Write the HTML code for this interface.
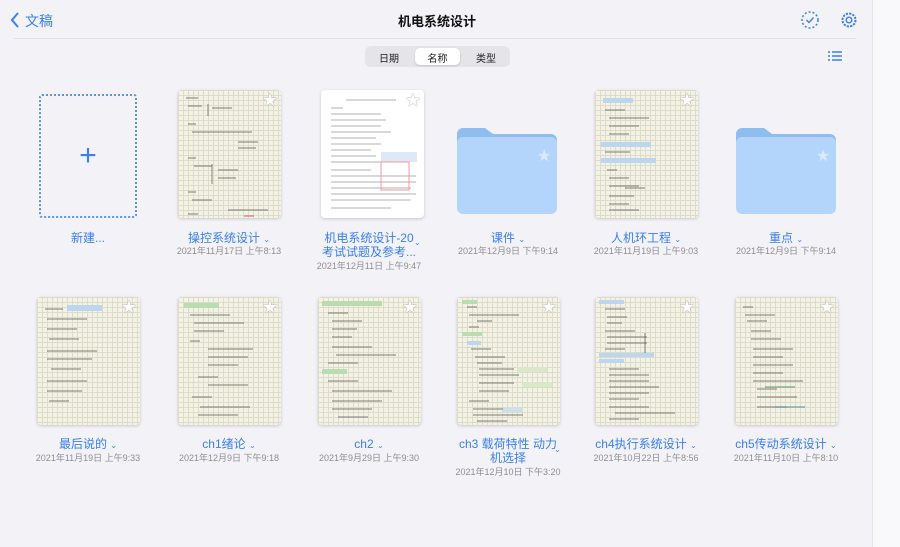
<!DOCTYPE html>
<html><head><meta charset="utf-8"><style>
*{margin:0;padding:0;box-sizing:border-box}
body{width:900px;height:547px;background:#f2f2f7;font-family:"Liberation Sans","Noto Sans CJK SC",sans-serif;position:relative;overflow:hidden}
.side{position:absolute;left:872px;top:0;width:28px;height:547px;background:#f9f9fc;border-left:1px solid #e6e6ea}
.abs{position:absolute}
.card{position:absolute;width:103px;height:128px;border-radius:4px;box-shadow:0 1px 3px rgba(0,0,0,.18);overflow:hidden;
background-color:#f3f2e4;background-image:linear-gradient(#dcdccb 1px,transparent 1px),linear-gradient(90deg,#dcdccb 1px,transparent 1px);background-size:5px 5px}
.card.w{background:#fff}
.star{position:absolute;right:3px;top:2px;font-size:18px;color:#fff;font-family:"DejaVu Sans",sans-serif;text-shadow:0 0 1px #999,0 0 1px #999;line-height:1}
.t{position:absolute;width:140px;text-align:center;color:#3b7ff2;font-size:12px;line-height:14px}
.d{position:absolute;width:150px;text-align:center;color:#8e8e93;font-size:9px}
.car{font-size:8px;color:#3b7ff2}
svg.s{position:absolute;left:0;top:0}
</style></head><body>
<div class="side"></div>
<svg class="abs" style="left:10px;top:12px" width="10" height="16"><path d="M8 1L2 8l6 7" fill="none" stroke="#3b7ff2" stroke-width="2"/></svg>
<div class="abs" style="left:25px;top:11px;color:#3b7ff2;font-size:14px">文稿</div>
<div class="abs" style="left:0;width:874px;top:11px;text-align:center;font-size:13px;font-weight:bold;color:#111">机电系统设计</div>
<svg class="abs" style="left:800px;top:10px" width="20" height="20"><circle cx="10" cy="10" r="8" fill="none" stroke="#3b7ff2" stroke-width="1.5" stroke-dasharray="2 2"/><path d="M6.5 10l2.5 2.5 4.5-5" fill="none" stroke="#3b7ff2" stroke-width="1.4"/></svg>
<svg class="abs" style="left:840px;top:11px" width="18" height="18"><circle cx="9" cy="9" r="6.5" fill="none" stroke="#3b7ff2" stroke-width="2" stroke-dasharray="2.2 1.2"/><circle cx="9" cy="9" r="2.8" fill="none" stroke="#3b7ff2" stroke-width="1.4"/></svg>
<div class="abs" style="left:14px;top:38px;width:842px;height:1px;background:#e2e2e6"></div>
<div class="abs" style="left:365px;top:46px;width:145px;height:21px;background:#e4e4e9;border-radius:6px"></div>
<div class="abs" style="left:415px;top:48px;width:45px;height:17px;background:#fff;border-radius:5px;box-shadow:0 1px 2px rgba(0,0,0,.15)"></div>
<div class="abs" style="left:365px;top:50px;width:48px;text-align:center;font-size:10px;color:#222">日期</div>
<div class="abs" style="left:415px;top:50px;width:45px;text-align:center;font-size:10px;color:#222">名称</div>
<div class="abs" style="left:462px;top:50px;width:48px;text-align:center;font-size:10px;color:#222">类型</div>
<svg class="abs" style="left:827px;top:50px" width="16" height="12"><g stroke="#3b7ff2" stroke-width="1.5"><path d="M1 2h2M5 2h10M1 6h2M5 6h10M1 10h2M5 10h10"/></g></svg>

<div class="abs" style="left:39px;top:94px;width:98px;height:124px;border:2px dotted #5a94f0;border-radius:3px"></div>
<div class="abs" style="left:39px;top:136px;width:98px;text-align:center;color:#3b7ff2;font-size:30px;font-weight:300;line-height:40px">+</div>
<div class="t" style="left:18px;top:231px">新建...</div>

<div class="card" style="left:178px;top:90px"><svg class="s" width="103" height="128"><g stroke="#555" stroke-width=".7" fill="none"><path d="M8 8h12M10 16h14M30 14v12M34 18h20M10 34h8M14 42h60M60 52h20M60 58h18M10 68h8M16 76h18M34 74v20M40 80h20M40 88h18M10 102h8M14 110h20M10 124h10M50 120h40"/><path d="M66 126h10" stroke="#c33"/></g></svg><div class="star">★</div></div>
<div class="card w" style="left:321px;top:90px"><svg class="s" width="103" height="128"><g stroke="#999" stroke-width=".7"><path d="M25 10h50M10 18h12M10 24h50M10 30h55M10 36h50M10 42h60M10 48h45M10 54h50M10 60h40M10 66h45M10 72h50M10 80h40M10 86h85M10 92h85M10 98h80M10 104h85M10 110h80M10 118h60"/></g><rect x="60" y="62" width="36" height="10" fill="#dde9f8"/><rect x="60" y="72" width="28" height="28" fill="none" stroke="#e99"/></svg><div class="star">★</div></div>
<svg class="abs" style="left:457px;top:128px" width="100" height="86"><path d="M0 6a6 6 0 0 1 6-6h22l8 6h58a6 6 0 0 1 6 6v10H0z" fill="#8fbdef"/><rect x="0" y="9" width="100" height="77" rx="6" fill="#b3d5fb"/><text x="80" y="33" font-size="16" fill="#dce9f8" font-family="DejaVu Sans">★</text></svg>
<div class="card" style="left:595px;top:90px"><svg class="s" width="103" height="128"><rect x="8" y="8" width="30" height="5" fill="#bcd6f0"/><rect x="6" y="52" width="50" height="5" fill="#bcd6f0"/><rect x="6" y="68" width="55" height="5" fill="#bcd6f0"/><g stroke="#555" stroke-width=".7"><path d="M10 20h20M14 28h40M14 36h30M14 44h20M10 62h25M12 80h10M14 88h20M14 96h30M30 98h20M14 106h25M14 114h20M14 120h30"/></g></svg><div class="star">★</div></div>
<svg class="abs" style="left:736px;top:128px" width="100" height="86"><path d="M0 6a6 6 0 0 1 6-6h22l8 6h58a6 6 0 0 1 6 6v10H0z" fill="#8fbdef"/><rect x="0" y="9" width="100" height="77" rx="6" fill="#b3d5fb"/><text x="80" y="33" font-size="16" fill="#dce9f8" font-family="DejaVu Sans">★</text></svg>

<div class="t" style="left:159px;top:231px">操控系统设计 <span class="car">⌄</span></div>
<div class="d" style="left:154px;top:244px">2021年11月17日 上午8:13</div>
<div class="t" style="left:299px;top:231px">机电系统设计-20<br>考试试题及参考...</div><span class="abs car" style="left:414px;top:238px">⌄</span>
<div class="d" style="left:294px;top:259px">2021年12月11日 上午9:47</div>
<div class="t" style="left:438px;top:231px">课件 <span class="car">⌄</span></div>
<div class="d" style="left:433px;top:244px">2021年12月9日 下午9:14</div>
<div class="t" style="left:576px;top:231px">人机环工程 <span class="car">⌄</span></div>
<div class="d" style="left:571px;top:244px">2021年11月19日 上午9:03</div>
<div class="t" style="left:716px;top:231px">重点 <span class="car">⌄</span></div>
<div class="d" style="left:711px;top:244px">2021年12月9日 下午9:14</div>

<div class="card" style="left:37px;top:297px"><svg class="s" width="103" height="128"><rect x="30" y="8" width="35" height="6" fill="#bcd6f0"/><g stroke="#555" stroke-width=".7"><path d="M8 12h18M10 22h40M10 32h30M12 42h30M10 54h50M10 62h45M14 72h30M10 84h40M10 94h35M12 104h20"/></g></svg><div class="star">★</div></div>
<div class="card" style="left:178px;top:297px"><svg class="s" width="103" height="128"><rect x="6" y="6" width="35" height="5" fill="#b9dcb0"/><g stroke="#555" stroke-width=".7"><path d="M12 18h40M16 26h50M16 34h30M12 44h10M30 52h45M30 60h40M30 68h30M20 80h20M30 88h40M14 100h20M22 110h50M20 118h40"/></g></svg><div class="star">★</div></div>
<div class="card" style="left:318px;top:297px"><svg class="s" width="103" height="128"><rect x="4" y="4" width="60" height="5" fill="#b9dcb0"/><rect x="4" y="72" width="25" height="5" fill="#b9dcb0"/><g stroke="#555" stroke-width=".7"><path d="M10 16h20M14 24h30M14 32h25M14 40h20M14 50h40M18 58h60M10 66h30M10 84h30M14 94h60M14 104h50M14 112h40M20 120h30"/></g></svg><div class="star">★</div></div>
<div class="card" style="left:457px;top:297px"><svg class="s" width="103" height="128"><rect x="5" y="3" width="15" height="4" fill="#b9dcb0"/><rect x="5" y="35" width="20" height="4" fill="#b9dcb0"/><rect x="10" y="44" width="14" height="4" fill="#bcd6f0"/><rect x="60" y="70" width="30" height="5" fill="#d8e8c8"/><rect x="65" y="85" width="30" height="5" fill="#d8e8c8"/><rect x="45" y="110" width="20" height="5" fill="#cde0ea"/><g stroke="#555" stroke-width=".7"><path d="M10 10h10M12 18h50M20 24h15M12 30h10M14 52h20M18 60h30M20 66h25M22 72h35M22 78h40M22 86h35M22 94h30M12 104h20M16 112h30M16 118h50M20 124h30"/></g></svg><div class="star">★</div></div>
<div class="card" style="left:595px;top:297px"><svg class="s" width="103" height="128"><rect x="4" y="3" width="25" height="4" fill="#bcd6f0"/><rect x="4" y="56" width="55" height="4" fill="#bcd6f0"/><rect x="4" y="62" width="25" height="4" fill="#bcd6f0"/><g stroke="#555" stroke-width=".7"><path d="M10 12h20M12 20h20M12 26h15M10 34h30M12 40h40M12 46h40M50 36v20M10 52h20M14 72h30M14 78h40M14 84h40M14 90h50M14 96h40M14 102h30M14 110h40M20 116h60M14 122h30"/></g></svg><div class="star">★</div></div>
<div class="card" style="left:735px;top:297px"><svg class="s" width="103" height="128"><g stroke="#555" stroke-width=".7"><path d="M8 10h10M10 18h30M12 24h20M16 34h20M16 42h30M18 52h40M18 60h30M18 68h40M18 76h30M18 84h50M22 92h20M22 100h40M22 110h30"/><path d="M30 90h30" stroke="#2a7a3a"/><path d="M40 110h30" stroke="#2a6a9a"/></g></svg><div class="star">★</div></div>

<div class="t" style="left:18px;top:437px">最后说的 <span class="car">⌄</span></div>
<div class="d" style="left:13px;top:451px">2021年11月19日 上午9:33</div>
<div class="t" style="left:159px;top:437px">ch1绪论 <span class="car">⌄</span></div>
<div class="d" style="left:154px;top:451px">2021年12月9日 下午9:18</div>
<div class="t" style="left:299px;top:437px">ch2 <span class="car">⌄</span></div>
<div class="d" style="left:294px;top:451px">2021年9月29日 上午9:30</div>
<div class="t" style="left:438px;top:437px">ch3 载荷特性 动力<br>机选择</div><span class="abs car" style="left:554px;top:445px">⌄</span>
<div class="d" style="left:433px;top:465px">2021年12月10日 下午3:20</div>
<div class="t" style="left:576px;top:437px">ch4执行系统设计 <span class="car">⌄</span></div>
<div class="d" style="left:571px;top:451px">2021年10月22日 上午8:56</div>
<div class="t" style="left:716px;top:437px">ch5传动系统设计 <span class="car">⌄</span></div>
<div class="d" style="left:711px;top:451px">2021年11月10日 上午8:10</div>
</body></html>
